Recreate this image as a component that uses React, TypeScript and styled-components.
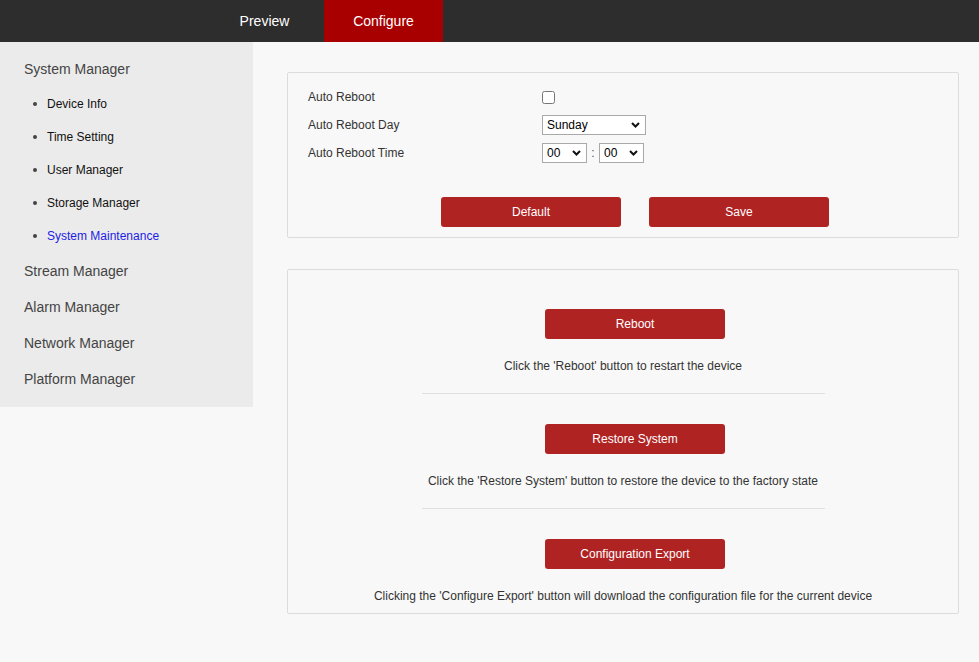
import React from 'react'
import styled, { createGlobalStyle } from 'styled-components'

const GlobalStyle = createGlobalStyle`
  html, body {
    margin: 0;
    padding: 0;
    background: #f8f8f8;
    font-family: 'Liberation Sans', Arial, sans-serif;
  }
`

const Page = styled.div`
  width: 979px;
  height: 662px;
  display: flex;
  flex-direction: column;
  background: #f8f8f8;
  overflow: hidden;
`

const TopBar = styled.header`
  height: 42px;
  flex-shrink: 0;
  background: #2d2d2d;
  display: flex;
  padding-left: 205px;
`

const Tab = styled.div<{ $active?: boolean }>`
  width: 119px;
  display: flex;
  align-items: center;
  justify-content: center;
  font-size: 14px;
  color: #fff;
  background: ${(p) => (p.$active ? '#a80000' : 'transparent')};
`

const Body = styled.div`
  flex: 1;
  display: flex;
  align-items: flex-start;
`

const Sidebar = styled.nav`
  width: 253px;
  flex-shrink: 0;
  background: #ebebeb;
  padding: 9px 0 10px;
`

const MenuItem = styled.div`
  height: 36px;
  line-height: 36px;
  padding-left: 24px;
  font-size: 14px;
  color: #444;
`

const SubList = styled.ul`
  list-style: none;
  margin: 0 0 1px;
  padding: 0;
`

const SubItem = styled.li<{ $active?: boolean }>`
  height: 33px;
  display: flex;
  align-items: center;
  padding-left: 33px;
  font-size: 12px;
  color: ${(p) => (p.$active ? '#1c1ce6' : '#111')};

  &::before {
    content: '';
    width: 4px;
    height: 4px;
    border-radius: 50%;
    background: #444;
    margin-right: 10px;
  }
`

const Content = styled.main`
  flex: 1;
  padding: 30px 20px 0 34px;
  display: flex;
  flex-direction: column;
  gap: 31px;
`

const Panel = styled.section<{ $pad: string }>`
  width: 672px;
  box-sizing: border-box;
  border: 1px solid #dcdcdc;
  border-radius: 2px;
  background: #f8f8f8;
  padding: ${(p) => p.$pad};
`

const FormRow = styled.div`
  height: 28px;
  display: flex;
  align-items: center;
  padding-left: 20px;
`

const Label = styled.span`
  width: 234px;
  font-size: 12px;
  color: #333;
`

const Checkbox = styled.input`
  width: 13px;
  height: 13px;
  margin: 0;
  accent-color: #767676;
`

const SelectWrap = styled.span<{ $w: number }>`
  position: relative;
  display: inline-block;
  width: ${(p) => p.$w}px;
  height: 20px;

  svg {
    position: absolute;
    right: 6px;
    top: 7px;
    pointer-events: none;
  }
`

const Select = styled.select`
  appearance: none;
  width: 100%;
  height: 20px;
  box-sizing: border-box;
  border: 1px solid #a9a9a9;
  border-radius: 0;
  background: #fff;
  padding: 0 0 0 4px;
  font-family: 'Liberation Sans', Arial, sans-serif;
  font-size: 12px;
  color: #000;
  outline: none;
`

const Colon = styled.span`
  width: 12px;
  text-align: center;
  font-size: 12px;
  color: #555;
`

const ButtonRow = styled.div`
  display: flex;
  justify-content: center;
  gap: 28px;
  padding-left: 24px;
  margin-top: 30px;
`

const RedButton = styled.button`
  width: 180px;
  height: 30px;
  border: none;
  border-radius: 3px;
  background: #b02323;
  color: #fff;
  font-family: 'Liberation Sans', Arial, sans-serif;
  font-size: 12px;
  font-weight: normal;
  cursor: pointer;
`

const Action = styled.div`
  display: flex;
  flex-direction: column;
  align-items: center;
`

const ActionButtonRow = styled.div`
  display: flex;
  justify-content: center;
  padding-left: 24px;
  align-self: stretch;
`

const Hint = styled.p`
  margin: 19px 0 0;
  line-height: 16px;
  font-size: 12px;
  color: #333;
  text-align: center;
`

const Divider = styled.hr`
  width: 403px;
  margin: 19px auto 30px;
  border: none;
  border-top: 1px solid #e0e0e0;
`

const Chevron = () => (
  <svg width="9" height="6" viewBox="0 0 9 6">
    <path d="M1 1l3.5 3.5L8 1" fill="none" stroke="#111" strokeWidth="2" />
  </svg>
)

const TimeSelect = () => (
  <SelectWrap $w={45}>
    <Select defaultValue="00">
      <option>00</option>
    </Select>
    <Chevron />
  </SelectWrap>
)

const subItems = ['Device Info', 'Time Setting', 'User Manager', 'Storage Manager', 'System Maintenance']
const otherMenus = ['Stream Manager', 'Alarm Manager', 'Network Manager', 'Platform Manager']

const actions = [
  { label: 'Reboot', hint: "Click the 'Reboot' button to restart the device" },
  { label: 'Restore System', hint: "Click the 'Restore System' button to restore the device to the factory state" },
  {
    label: 'Configuration Export',
    hint: "Clicking the 'Configure Export' button will download the configuration file for the current device",
  },
]

export default function App() {
  return (
    <Page>
      <GlobalStyle />
      <TopBar>
        <Tab>Preview</Tab>
        <Tab $active>Configure</Tab>
      </TopBar>
      <Body>
        <Sidebar>
          <MenuItem>System Manager</MenuItem>
          <SubList>
            {subItems.map((s) => (
              <SubItem key={s} $active={s === 'System Maintenance'}>
                {s}
              </SubItem>
            ))}
          </SubList>
          {otherMenus.map((m) => (
            <MenuItem key={m}>{m}</MenuItem>
          ))}
        </Sidebar>

        <Content>
          <Panel $pad="10px 0 10px">
            <FormRow>
              <Label>Auto Reboot</Label>
              <Checkbox type="checkbox" />
            </FormRow>
            <FormRow>
              <Label>Auto Reboot Day</Label>
              <SelectWrap $w={104}>
                <Select defaultValue="Sunday">
                  <option>Sunday</option>
                  <option>Monday</option>
                  <option>Tuesday</option>
                  <option>Wednesday</option>
                  <option>Thursday</option>
                  <option>Friday</option>
                  <option>Saturday</option>
                </Select>
                <Chevron />
              </SelectWrap>
            </FormRow>
            <FormRow>
              <Label>Auto Reboot Time</Label>
              <TimeSelect />
              <Colon>:</Colon>
              <TimeSelect />
            </FormRow>
            <ButtonRow>
              <RedButton>Default</RedButton>
              <RedButton>Save</RedButton>
            </ButtonRow>
          </Panel>

          <Panel $pad="39px 0 9px">
            {actions.map((a, i) => (
              <Action key={a.label}>
                <ActionButtonRow>
                  <RedButton>{a.label}</RedButton>
                </ActionButtonRow>
                <Hint>{a.hint}</Hint>
                {i < actions.length - 1 && <Divider />}
              </Action>
            ))}
          </Panel>
        </Content>
      </Body>
    </Page>
  )
}
